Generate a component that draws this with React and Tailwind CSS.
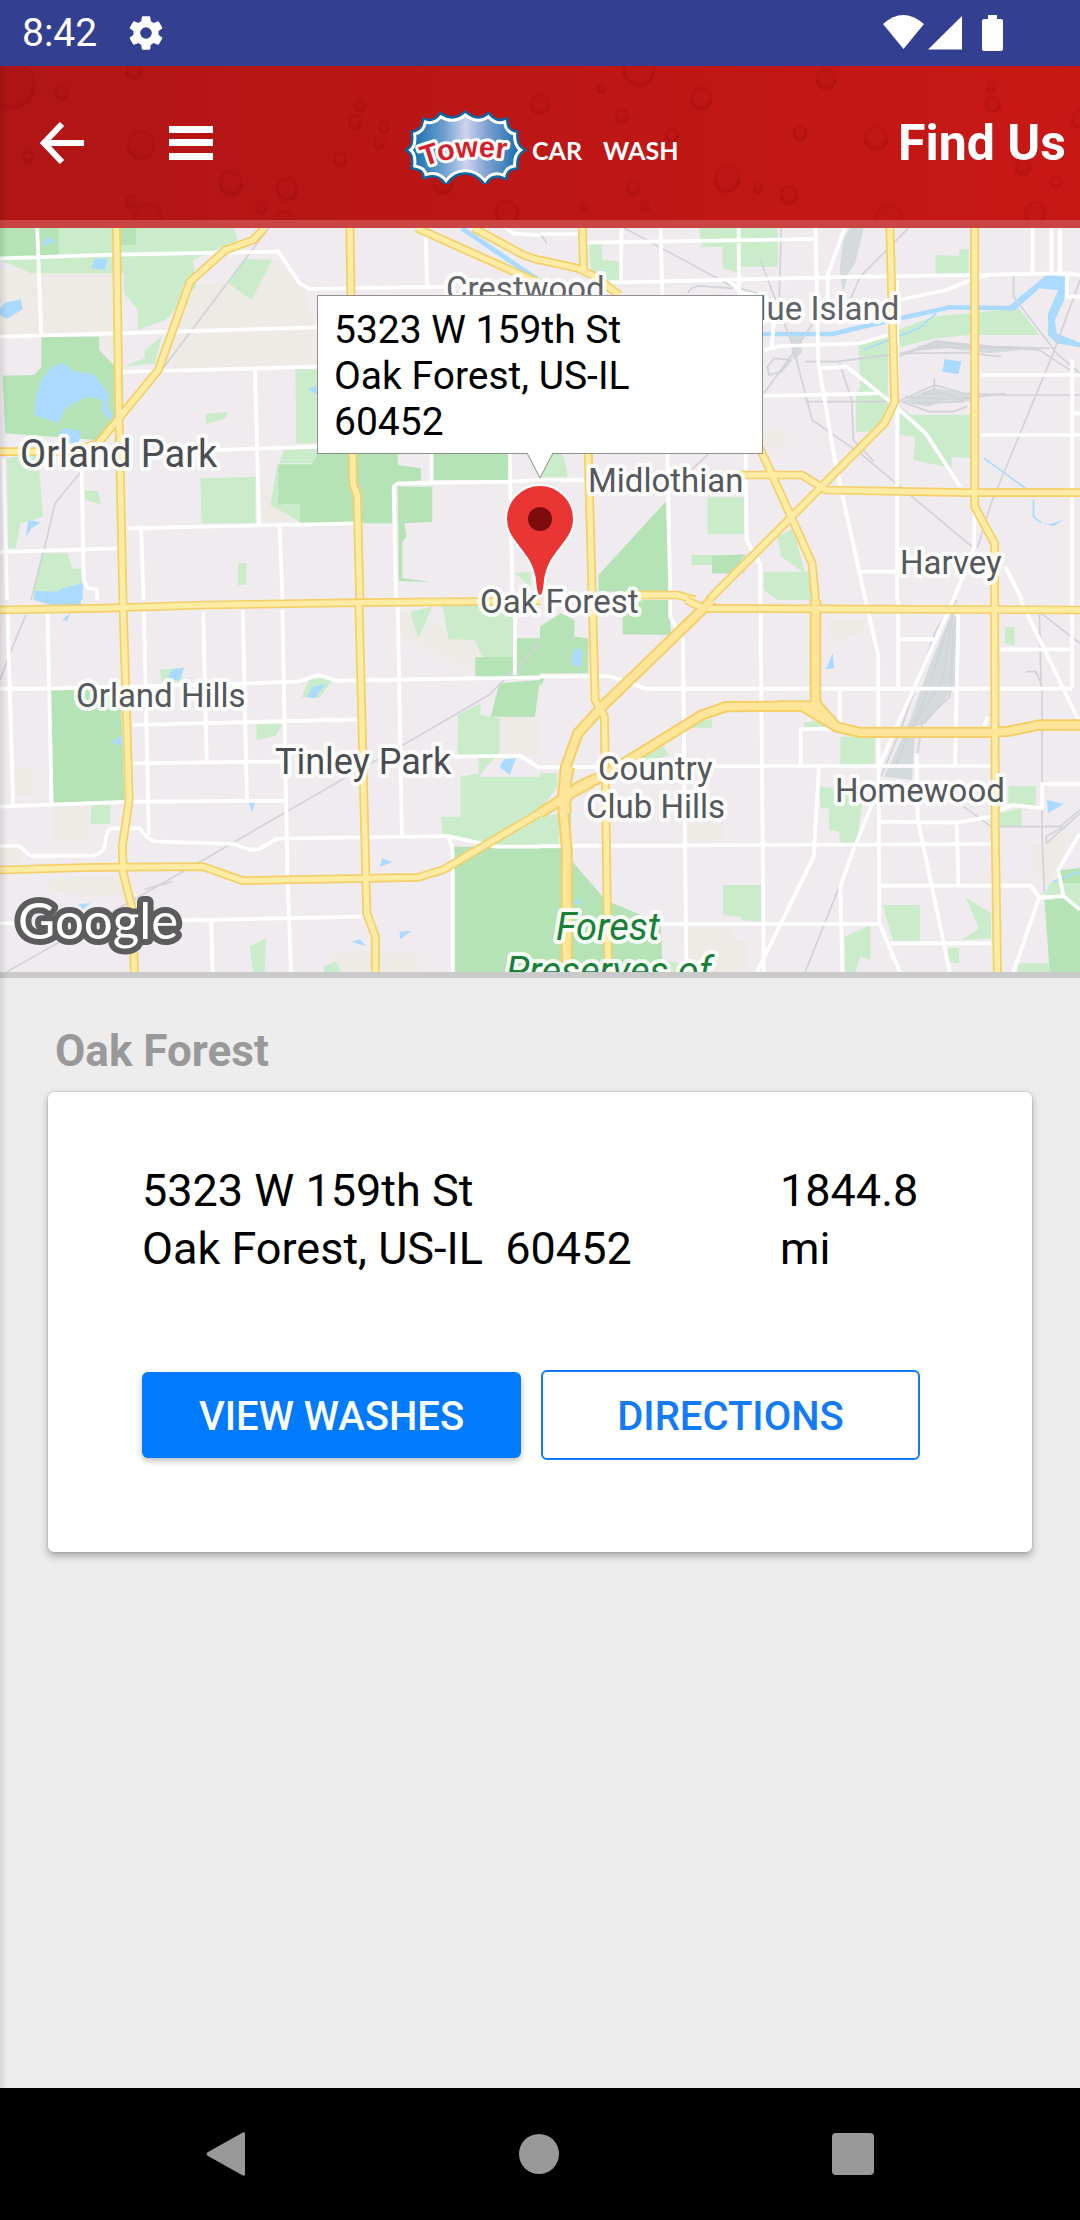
import { useState } from "react";

// The map is split in four tiles, each drawn in its own 1568 x 1140 space
const tiles = [
  {
    id: "nw",
    transform: "translate(0 -8) scale(0.3444 0.3333)",
    beige: ["M0 150L330 160L345 440L300 380L100 345L0 350Z", "M500 330L920 325L920 440L500 445Z", "M755 800L870 850V905H755Z", "M560 190H730L800 120L880 205L920 325L520 335Z"],
    light: [
      "M0 24H680L690 60L560 120L570 200L480 300L400 330V270L360 220V160H90L0 120Z",
      "M715 118L790 120L730 240L662 190Z",
      "M858 448H920V670H860Z",
      "M582 775L742 770V910H585Z",
      "M596 582L662 575L655 595L600 612Z",
      "M825 688H930V730H810Z",
      "M420 390L470 350L450 430L360 440L420 415Z",
      "M20 715L110 700L125 890L60 910L45 985H24Z",
      "M245 812H285L293 853L248 840Z",
      "M120 1000H195L210 1045L240 1048V1140H95Z",
      "M692 1030H715V1095H690Z",
      "M805 735L785 855L870 905V735Z",
      "M1495 1060L1540 1055V1100Z",
    ],
    dark: [
      "M0 24H170V110L0 120Z",
      "M350 24H395V75H350Z",
      "M120 350H288V390L335 440L345 590L280 660L15 640L8 467L100 465L120 440Z",
      "M808 733H905L930 690H1155V735L1222 745V780L1150 800L1140 910H870V852H808Z",
      "M1155 800H1255V905L1175 910L1180 950L1168 965V1075L1250 1085L1158 1083Z",
      "M1258 700H1476V780H1258Z",
    ],
    water: [
      "M120 480L150 440L185 430L215 455L270 462L315 520L312 560L330 590L318 600L295 570L300 540L250 530L190 565L170 610L100 585L105 525Z",
      "M0 265L15 248L60 238L66 268L20 296L0 285Z",
      "M125 65L140 50L160 62L130 77Z",
      "M265 145L275 115L312 118L305 150Z",
      "M172 640L185 625L235 632L228 670H200Z",
      "M82 900L117 907L92 925L75 950Z",
      "M182 1105L240 1090V1140H100V1112L165 1115Z",
      "M893 508L920 498V522Z",
    ],
    river: ["M1340 24L1570 185"],
    rail: ["M780 24L550 340L470 450", "M235 755L160 850L130 980L90 1140"],
    streets: [
      "M108 24L120 350", "M0 115L330 104L690 97L808 95L870 190L900 207L1300 200", "M1236 24L1240 200", "M0 350L330 340L920 322",
      "M350 456L920 440", "M740 450L745 620L752 912", "M620 690L930 680", "M0 996L345 985", "M10 715L20 1140", "M237 750L243 1080L255 1105L282 1108V1140",
      "M370 925L1030 910", "M410 930L417 1140", "M812 915L820 1140", "M1150 1140L1143 800L1155 790L1480 785L1568 780", "M1253 700V790", "M1480 700L1488 1140",
      "M1440 0L1490 40L1568 46",
    ],
    roads: [
      "M338 24L345 560L357 1140", "M768 24L735 60L655 90L552 185L460 450L345 595L285 670L200 695H0",
      "M1016 24L1022 440L1025 790L1037 825L1045 1140", "M1210 24L1568 190", "M1375 24L1520 105L1568 122",
    ],
  },
  {
    id: "ne",
    transform: "translate(540 -8) scale(0.3444 0.3333)",
    beige: ["M640 630H710V680H640Z"],
    light: [
      "M462 24H690V140H585V160L530 145V80H470Z", "M142 72H180V120L235 125V180H150Z", "M1148 105L1218 108V88H1245V160H1148Z",
      "M1040 330L1140 290L1390 265L1450 345L1245 345L1150 355L1045 380Z", "M925 375L1010 350V610L980 635H918V530L930 500Z",
      "M1045 560L1080 585H1250V715L1195 710V745L1085 720L1090 650L1045 645Z", "M486 832H592V943H486Z",
      "M440 1005H595V1060H500V1035H440Z", "M690 950L735 925L770 1060L700 1010Z", "M650 1055H790V1140H690L650 1110Z",
      "M0 700H60Q78 720 80 772H0Z",
    ],
    dark: ["M365 845L375 1115H170V1065Z", "M500 1008L595 1003L560 1060H500Z"],
    water: ["M1365 255L1470 165L1525 170L1522 240L1495 300L1500 340L1568 368V382L1500 370L1475 345V280L1505 210L1450 205L1380 270L1355 272Z", "M1175 418L1223 424L1215 462L1168 455Z", "M1450 908L1480 913L1520 900L1490 918Z"],
    river: ["M645 342H850L930 322L1190 262L1370 264"],
    creek: ["M940 390L1100 325L1150 280", "M1290 715L1410 805", "M1433 840V890L1455 908"],
    rail: [
      "M245 24L560 200L650 225", "M20 70L0 40", "M640 120L735 380L790 600L930 700L1260 985", "M650 520L735 400L830 250", "M700 24L695 230", "M1070 24L930 170L900 240",
      "M770 425H860L1050 400L1180 370L1450 390L1568 470", "M1040 410L1150 365L1320 380L1480 385", "M1060 400L1230 398L1340 410", "M1100 380L1440 385",
      "M770 545H1040L1145 495L1230 520L1350 525H1568", "M1050 545L1130 575H1200L1240 560", "M1060 530L1200 540L1350 520", "M1145 475V510L1110 520H1180L1230 545L1080 550", "M1568 180L1490 400L1310 850L1270 985",
      "M1375 160V230L1500 400L1568 460", "M660 440L680 415L730 420L700 455L665 465Z", "M905 540L910 660L970 725", "M440 750L495 695", "M430 220Q440 190 490 200L560 205", "M870 430L905 540",
    ],
    yards: ["M880 60L900 24H940L915 130L895 160L880 220L870 150Z", "M725 350L760 340V400L735 420Z", "M1050 545L1140 505L1250 520L1260 545L1180 540L1130 560Z", "M1060 395L1150 360L1320 380L1450 385L1300 400L1180 385Z"],
    streets: [
      "M130 68L800 57", "M0 42H110", "M237 24L235 180", "M350 24L355 225", "M577 24L578 220", "M800 24L808 430L860 740L945 1140", "M200 188L830 172L1250 165L1530 160L1570 165", "M885 24L835 165V240",
      "M545 180L600 230", "M1530 160V230H1568", "M1430 24V155", "M1485 24V155", "M1510 24V155", "M650 390L700 378L930 370L1010 345", "M1040 240L1180 210L1250 180L1300 165", "M680 300L672 385",
      "M808 445L890 440L1020 548L1120 640L1220 800", "M650 528L980 520", "M1280 465H1568", "M1280 645H1568", "M1545 420V1140", "M1545 580H1568", "M1037 180V1140", "M0 780H130",
      "M370 700L378 1115", "M597 700L600 960L640 1035V1140", "M925 1055H1040", "M1262 880L1260 985L1200 1140", "M1350 1040L1400 1140",
    ],
    roads: [
      "M0 120L110 145L160 170L230 225", "M123 24L127 160", "M1262 24V860L1320 970V1140", "M140 700L152 1140", "M540 765H760L830 810L1240 818H1568", "M1016 24L1030 545L1000 610L490 1140",
      "M620 650L650 710L790 1030L800 1140", "M250 1125H400L450 1140",
    ],
  },
  {
    id: "sw",
    transform: "translate(0 372) scale(0.3444 0.3333)",
    beige: ["M1165 30L1380 120V220L1165 110Z", "M45 505H95V585H45Z", "M155 620H260V720L155 725Z", "M140 830H360V890L145 880Z", "M1450 350H1568V470H1450Z", "M955 1060H1210V1116H960Z", "M0 745H60V790H0Z"],
    light: [
      "M1190 35L1255 20L1215 115Z", "M1285 15H1490V170L1400 172L1378 120L1302 118Z", "M465 208H530V245H468Z", "M875 290L900 235H970L925 295Z", "M745 373H820L800 408L745 420Z",
      "M265 615H320V672H263Z", "M1330 345L1395 310V345L1450 355L1450 455L1390 530H1568V745H1440L1285 705L1280 650L1337 650V530L1390 520V465H1328Z", "M725 1040L773 1015L768 1116H735Z", "M940 1100L975 1085L992 1116H940Z",
    ],
    dark: ["M145 268L350 270L362 605L152 608Z", "M1380 172L1490 170L1500 115H1568V235L1470 240L1380 228Z", "M1450 250L1568 240L1553 350H1425Z", "M1318 740H1568V1116H1318Z"],
    water: ["M100 0H235V15L165 20Z", "M180 60L205 38L195 62Z", "M490 225L500 208L535 203L520 240H490Z", "M892 292L905 262L945 252L915 294Z", "M330 420L355 408V435L325 430Z", "M722 608H741L732 635Z", "M1450 500L1465 478L1498 475L1480 525Z", "M1110 775L1140 787L1102 800Z", "M1160 995L1195 992L1162 1018Z", "M1020 1025L1045 1018L1062 1038Z", "M228 912L262 910L240 928Z"],
    rail: ["M75 45L35 145L0 240", "M1568 130L1420 285L1170 435L1000 535L590 780L20 1116", "M420 868L500 845"],
    streets: [
      "M22 40L38 612", "M138 40L150 610", "M0 266H150L720 250L865 245L925 225L980 242L1568 232", "M418 35L432 705", "M590 35L600 480", "M705 30L717 600", "M820 30L835 830L845 1116", "M1155 20L1167 705",
      "M385 375L1040 358", "M385 490L830 484", "M0 620L380 605L830 602", "M0 738H55L90 768H270Q300 760 305 735Q308 690 325 685H405Q430 722 450 724L680 732Q740 760 760 742L805 716L1300 708L1440 740H1568",
      "M1300 708Q1315 730 1315 780V1116", "M1310 470L1510 467L1568 505", "M1495 50V225", "M0 970H60", "M500 962L1050 950", "M613 960L617 1116",
    ],
    roads: ["M0 30L280 25L595 15L1040 8L1568 3", "M357 0L375 600L355 740L358 820L385 930L390 1116", "M0 810L260 802L590 800L705 842L1215 832L1290 808L1568 638", "M1042 0L1065 940L1090 1010V1116"],
  },
  {
    id: "se",
    transform: "translate(540 372) scale(0.3444 0.3333)",
    beige: ["M840 55H940V95L845 130Z", "M430 985H560V1020H600V1116H430Z", "M430 670H530V720H430Z", "M1430 740L1545 690L1500 800L1470 860L1430 800Z"],
    light: [
      "M240 0H330V60H240Z", "M1350 80H1378V138L1350 130Z", "M872 410H972V492H872Z", "M812 560L940 575L920 735L870 725V695L840 690V625L815 625Z", "M532 855H642V965L585 960V950L532 945Z",
      "M995 915H1103V1022H1025Z", "M1236 893L1310 940V1015L1225 1020L1275 985Z", "M885 1010L960 975V1080L930 1070L915 1116H885Z", "M1360 558H1440V615H1360Z", "M1335 640L1398 625V680L1335 678Z",
      "M0 520H50V560L0 630Z", "M0 650L55 640V735H0Z", "M440 365L500 357V383H440Z", "M765 370L830 355V385H770Z", "M350 430L375 465L290 495V450Z", "M1185 1045H1217V1090L1180 1085Z", "M1390 1090H1480V1116H1385Z", "M1480 850L1568 800V920L1465 890Z", "M355 1080L435 1095V1116H355Z",
    ],
    dark: ["M0 80L60 40L100 60V110L140 115V220H0Z", "M240 55L300 0H375L380 105L240 103Z", "M0 745H70L90 600V780L190 900L350 970L357 1116H0Z", "M1465 900L1530 895L1568 930V1116L1480 1116Z", "M1510 810L1568 805V850L1510 850Z", "M0 235H15L0 260Z"],
    water: ["M90 180L100 145L122 150L120 200L95 195Z", "M830 208L850 160L854 205Z", "M1472 600L1520 612L1475 640Z", "M95 905L110 898L128 915Z"],
    creek: ["M1490 845L1568 815"],
    rail: [
      "M1210 0L1150 90L1050 380L990 530", "M1200 30L1170 240L1070 400", "M1190 60L1120 290L1030 500", "M1200 90L1190 290L1110 370L1090 500", "M1410 215H1440L1458 260V720L1465 880", "M1450 40L1455 260", "M1430 20L1568 130",
      "M1230 620L1310 680H1510L1568 630", "M1568 640L1470 730V710L1520 680", "M970 610L900 780L770 1116",
    ],
    yards: ["M1195 40L1215 60L1205 260L1120 370L1090 380L1080 540L1000 530L1075 360L1130 200Z"],
    streets: [
      "M640 0L650 1116", "M378 0V50L415 120L425 1116", "M945 0L982 165L985 970L1045 1116", "M1040 0V265", "M0 230L200 228L310 266H1545", "M1040 118H1150", "M1200 0L985 498", "M1215 30L1205 500", "M870 270V385L757 388V498", "M0 502L640 498H1310",
      "M810 500L795 770L630 1116", "M0 738L420 736L1310 732", "M970 600L910 750L872 860L878 1116", "M1093 460L1097 660L1190 1116", "M985 665L1210 668L1310 650", "M1210 668L1215 855", "M985 856L1425 857L1450 893L1520 888L1568 930",
      "M350 972H985", "M1020 1030H1310", "M1450 890L1375 1116", "M1520 890L1505 810L1568 700", "M1335 148H1540", "M1395 0L1568 370", "M1545 0V265", "M1335 630L1370 615L1458 625V552H1568", "M1300 350L1290 380",
    ],
    roads: ["M152 0L160 300L187 350L198 1116", "M1320 0L1322 700L1328 1116", "M480 25L1568 30", "M425 0L480 28"],
    highways: [
      "M500 0L180 320L110 400L75 500L65 600L78 750V1116", "M800 0V310L825 340L860 380L925 397H1310L1360 394L1450 375H1568", "M0 640L90 580L180 530L470 345L540 320L760 318L860 380", "M810 318H690", "M75 600Q90 560 180 530", "M85 500Q70 560 75 640",
    ],
  },
];

const labels = [
  { text: "Orland Park", x: 20, y: 239, className: "fill-[#4a4d51] text-[38px]" },
  { text: "Crestwood", x: 446, y: 72, className: "fill-[#606368] text-[33px]" },
  { text: "Blue Island", x: 738, y: 92, className: "fill-[#606368] text-[33px]" },
  { text: "Midlothian", x: 588, y: 264, className: "fill-[#55585c] text-[33px]" },
  { text: "Harvey", x: 900, y: 346, className: "fill-[#55585c] text-[33px]" },
  { text: "Oak Forest", x: 480, y: 385, className: "fill-[#55585c] text-[33px]" },
  { text: "Orland Hills", x: 76, y: 479, className: "fill-[#55585c] text-[33px]" },
  { text: "Tinley Park", x: 275, y: 546, className: "fill-[#4a4d51] text-[36px]" },
  { text: "Country", x: 598, y: 552, className: "fill-[#55585c] text-[33px]" },
  { text: "Club Hills", x: 586, y: 590, className: "fill-[#55585c] text-[33px]" },
  { text: "Homewood", x: 835, y: 574, className: "fill-[#55585c] text-[33px]" },
  { text: "Forest", x: 556, y: 712, className: "fill-[#188038] text-[38px] italic" },
  { text: "Preserves of", x: 506, y: 756, className: "fill-[#188038] text-[38px] italic" },
];

// Water drops of the header background: x, y, radius
const drops = [
  [12, 18, 22], [62, 26, 6], [134, 4, 7], [141, 78, 13], [231, 116, 11], [287, 122, 10], [148, 152, 14], [131, 135, 5], [261, 141, 5], [284, 157, 11],
  [360, 39, 5], [355, 55, 6], [384, 60, 5], [379, 76, 5], [340, 93, 6], [443, 117, 9], [507, 146, 11], [28, 90, 5], [540, 37, 9],
  [639, 3, 15], [701, 32, 10], [826, 12, 9], [622, 49, 6], [672, 68, 6], [800, 66, 6], [876, 71, 11], [727, 112, 12], [789, 128, 8], [889, 152, 13],
  [1035, 146, 10], [993, 37, 7], [991, 20, 4], [633, 121, 6], [1080, 52, 8], [601, 22, 3], [584, 141, 3], [1023, 100, 7], [1056, 115, 5], [758, 121, 4], [645, 139, 4],
];

const StatusBar = () => (
  <div className="flex h-[66px] items-center justify-between bg-[#333f90] text-white">
    <div className="flex items-center gap-7 pl-[22px]">
      <span className="text-[39px] leading-[46px]">8:42</span>
      <svg viewBox="0 0 24 24" className="h-[42px] w-[42px] fill-current" aria-hidden="true">
        <path d="M19.14 12.94c.04-.3.06-.61.06-.94 0-.32-.02-.64-.07-.94l2.03-1.58a.49.49 0 0 0 .12-.61l-1.92-3.32a.49.49 0 0 0-.59-.22l-2.39.96c-.5-.38-1.03-.7-1.62-.94l-.36-2.54a.48.48 0 0 0-.48-.41h-3.84c-.24 0-.43.17-.47.41l-.36 2.54c-.59.24-1.13.57-1.62.94l-2.39-.96a.48.48 0 0 0-.59.22L2.74 8.87c-.12.21-.08.47.12.61l2.03 1.58c-.05.3-.09.63-.09.94s.02.64.07.94l-2.03 1.58a.49.49 0 0 0-.12.61l1.92 3.32c.12.22.37.29.59.22l2.39-.96c.5.38 1.03.7 1.62.94l.36 2.54c.05.24.24.41.48.41h3.84c.24 0 .44-.17.47-.41l.36-2.54c.59-.24 1.13-.56 1.62-.94l2.39.96c.22.08.47 0 .59-.22l1.92-3.32a.49.49 0 0 0-.12-.61l-2.01-1.58zM12 15.3a3.3 3.3 0 1 1 0-6.6 3.3 3.3 0 0 1 0 6.6z" />
      </svg>
    </div>
    <svg viewBox="0 0 120 36" className="mr-[77px] h-9 w-[120px] fill-current" aria-hidden="true">
      <path d="M0 9Q20 -9 41 9L20.500 34Z" />
      <path d="M45 34.500L79 1V34.500Z" />
      <path d="M105 0h9v4h4a2 2 0 0 1 2 2v28a2 2 0 0 1-2 2h-17a2 2 0 0 1-2-2V6a2 2 0 0 1 2-2h4z" />
    </svg>
  </div>
);

const burst =
  "M92 150Q108 138 104 102Q132 96 136 66Q164 74 183 50Q220 74 256 45Q294 74 325 50Q346 74 374 66Q376 96 404 102Q402 136 422 150Q402 164 404 198Q376 202 372 226Q336 212 315 242Q290 212 256 212Q220 212 198 242Q176 212 138 224Q134 202 104 198Q108 162 92 150Z";

const Logo = () => (
  <svg viewBox="-5 0 280 82" className="h-[82px] w-[280px]" role="img" aria-label="Tower Car Wash">
    <defs>
      <linearGradient id="badge" x1="0" x2="1">
        <stop offset="0" stopColor="#0f6bab" />
        <stop offset="0.3" stopColor="#6d9fd0" />
        <stop offset="0.5" stopColor="#cdd4ec" />
        <stop offset="0.7" stopColor="#7da0d0" />
        <stop offset="1" stopColor="#0f6bab" />
      </linearGradient>
      <path id="arch" d="M132 200Q250 154 400 180" />
    </defs>
    <g transform="translate(-25 -2) scale(0.3333)">
      <path d={burst} fill="none" stroke="#0d64a2" strokeWidth="24" />
      <path d={burst} fill="url(#badge)" stroke="#fff" strokeWidth="9" />
      <g fontFamily="Liberation Sans, sans-serif" fontWeight="700" fontSize="87">
        <text fill="#d71f2b" stroke="#fff" strokeWidth="18" strokeLinejoin="round" paintOrder="stroke">
          <textPath href="#arch">Tower</textPath>
        </text>
      </g>
    </g>
    <g fill="#fff" fontFamily="Lato, sans-serif" fontWeight="700" fontSize="25">
      <text x="127" y="58">CAR</text>
      <text x="198" y="58">WASH</text>
    </g>
  </svg>
);

const Header = () => (
  <header className="relative h-[162px] border-b-8 border-[#cb4444] bg-linear-to-r from-[#b11515] to-[#c81815] text-white">
    <svg className="absolute inset-0 h-full w-full" viewBox="0 0 1080 154" preserveAspectRatio="xMidYMin slice" aria-hidden="true">
      {drops.map(([x, y, r]) => (
        <g key={`${x}-${y}`}>
          <circle cx={x} cy={y} r={r} fill="#7c0000" fillOpacity="0.03" stroke="#7c0000" strokeOpacity="0.09" strokeWidth="3" />
          <path d={`M${x - r} ${y + 2}A${r} ${r} 0 0 0 ${x + r} ${y + 2}`} fill="none" stroke="#6c0000" strokeOpacity="0.1" strokeWidth="3" />
        </g>
      ))}
    </svg>
    <div className="relative grid h-full grid-cols-[1fr_auto_1fr] items-center">
      <div className="flex items-center gap-[85px] pl-10">
        <button type="button" aria-label="Back">
          <svg viewBox="0 0 44 42" className="h-[42px] w-11 fill-none stroke-current stroke-[6]">
            <path d="M22 2L4 21L22 40M4 21H44" />
          </svg>
        </button>
        <button type="button" aria-label="Menu">
          <svg viewBox="0 0 44 34" className="h-[34px] w-11 fill-current">
            <path d="M0 0H44V7H0ZM0 13H44V20H0ZM0 27H44V34H0Z" />
          </svg>
        </button>
      </div>
      <Logo />
      <h1 className="pr-[14px] text-right text-[50px] leading-[60px] font-bold">Find Us</h1>
    </div>
  </header>
);

const Tile = ({ tile }) => (
  <g transform={tile.transform}>
    <path d={tile.beige.join("")} fill="#eeebe6" />
    <path d={tile.light.join("")} fill="#caecca" />
    <path d={tile.dark.join("")} fill="#b5e3b6" />
    <path d={tile.water.join("")} fill="#aadaff" />
    {tile.yards && <path d={tile.yards.join("")} fill="#d5dadd" />}
    <g fill="none" strokeLinejoin="round">
      {tile.river && <path d={tile.river.join("")} stroke="#aadaff" strokeWidth="14" />}
      {tile.creek && <path d={tile.creek.join("")} stroke="#aadaff" strokeWidth="5" />}
      <path d={tile.rail.join("")} stroke="#d2d3d8" strokeWidth="5" />
      <path d={tile.streets.join("")} stroke="#fff" strokeWidth="11" />
      <path d={tile.roads.join("")} stroke="#f5cf68" strokeWidth="26" />
      {tile.highways && <path d={tile.highways.join("")} stroke="#f5cf68" strokeWidth="34" />}
      <path d={tile.roads.join("")} stroke="#feeca4" strokeWidth="16" />
      {tile.highways && <path d={tile.highways.join("")} stroke="#fee59a" strokeWidth="22" />}
    </g>
  </g>
);

const MapView = ({ address }) => (
  <section aria-label="Map" className="relative h-[750px] overflow-hidden border-b-[6px] border-[#cacaca] bg-[#efebee]">
    <svg viewBox="0 0 1080 744" preserveAspectRatio="xMidYMid slice" className="h-full w-full">
      {tiles.map((tile) => (
        <Tile key={tile.id} tile={tile} />
      ))}
      <g stroke="#fff" strokeOpacity="0.85" strokeWidth="8" strokeLinejoin="round" paintOrder="stroke">
        {labels.map((label) => (
          <text key={label.text} x={label.x} y={label.y} className={label.className}>
            {label.text}
          </text>
        ))}
      </g>
      <text x="18" y="711" fontFamily="Lato, sans-serif" fontWeight="400" fontSize="51" fill="#fff" stroke="#5c5c5e" strokeWidth="12" strokeLinejoin="round" paintOrder="stroke">
        Google
      </text>
      {/* Marker */}
      <path
        d="M540 368C537 368 536 364 535 352C531 322 506 315 506 291A34 34 0 0 1 574 291C574 315 549 322 545 352C544 364 543 368 540 368Z"
        fill="#ea3535"
        stroke="#fff"
        strokeWidth="2"
      />
      <circle cx="540" cy="291" r="12" fill="#7d0d0d" />
    </svg>
    {/* Info window */}
    <div className="absolute top-[67px] left-1/2 w-[446px] -translate-x-1/2 border border-[#8f8f8f] bg-white pt-[11px] pb-2 pl-4 text-[39px] leading-[46px] text-black">
      <p>{address.street}</p>
      <p>
        {address.city}
        <br />
        {address.zip}
      </p>
      <svg viewBox="0 0 28 26" className="absolute top-full left-1/2 h-[26px] w-7 -translate-x-1/2" aria-hidden="true">
        <path d="M1 0L14 25L27 0" fill="#fff" stroke="#8f8f8f" />
      </svg>
    </div>
  </section>
);

const NavBar = () => (
  <nav className="flex h-[132px] items-center justify-between bg-black px-[206px]">
    <button type="button" aria-label="Back">
      <svg viewBox="0 0 40 46" className="h-[46px] w-10 fill-[#999]">
        <path d="M39 3V43Q39 46 36 44L2 25Q-1 23 2 21L36 2Q39 0 39 3Z" />
      </svg>
    </button>
    <button type="button" aria-label="Home" className="h-10 w-10 rounded-full bg-[#999]" />
    <button type="button" aria-label="Recent apps" className="h-[42px] w-[42px] rounded-sm bg-[#999]" />
  </nav>
);

const App = () => {
  const [location] = useState({
    name: "Oak Forest",
    street: "5323 W 159th St",
    city: "Oak Forest, US-IL",
    zip: "60452",
    distance: "1844.8 mi",
  });

  return (
    <div className="relative flex min-h-screen flex-col bg-[#ededed] font-['Roboto',sans-serif]">
      <StatusBar />
      <Header />
      <MapView address={location} />
      <main className="flex-1 px-12 pt-[47px]">
        <h2 className="pl-[7px] text-[44px] leading-[52px] font-bold text-[#999]">{location.name}</h2>
        <article className="mt-[15px] rounded-md bg-white pt-[70px] pr-28 pb-[92px] pl-[94px] shadow-[0_4px_8px_rgba(0,0,0,0.3),0_0_2px_rgba(0,0,0,0.25)]">
          <div className="flex justify-between text-[45px] leading-[58px] text-black">
            <p className="whitespace-pre-wrap">
              {location.street}
              <br />
              {`${location.city}  ${location.zip}`}
            </p>
            <p className="w-[140px]">{location.distance}</p>
          </div>
          <div className="mt-[92px] grid grid-cols-2 items-center gap-5">
            <button type="button" className="h-[86px] rounded-md bg-[#007aff] pt-1 text-[40px] font-medium text-white shadow-[0_3px_6px_rgba(0,0,0,0.25)]">
              VIEW WASHES
            </button>
            <button type="button" className="h-[90px] rounded-md border-2 border-[#127bf5] pt-1 text-[40px] font-medium text-[#127bf5]">
              DIRECTIONS
            </button>
          </div>
        </article>
      </main>
      <NavBar />
      {/* Drawer shadow on the left edge */}
      <div className="pointer-events-none absolute top-[66px] bottom-[132px] left-0 w-2 bg-linear-to-r from-black/10 to-transparent" />
    </div>
  );
};

export default App;
